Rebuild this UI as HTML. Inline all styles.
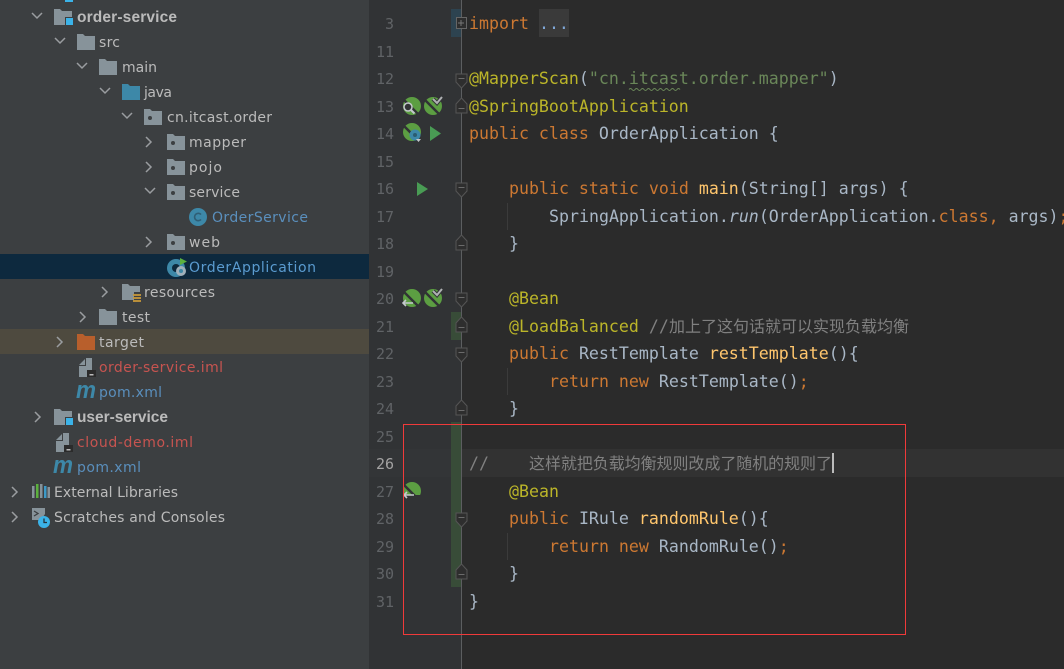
<!DOCTYPE html>
<html><head><meta charset="utf-8"><style>
html,body{margin:0;padding:0;background:#2b2b2b}
svg{display:block}
.t{font:14px "DejaVu Sans",sans-serif;fill:#bbb}
.b{font:bold 15.5px "Liberation Sans",sans-serif;fill:#bbb}
.m{font:16.6px "DejaVu Sans Mono","Noto Sans CJK SC",monospace;fill:#a9b7c6;white-space:pre}
.n{font:15px "DejaVu Sans Mono",monospace;fill:#606366}
.k{fill:#cc7832}.a{fill:#bbb529}.s{fill:#6a8759}.f{fill:#ffc66d}.c{fill:#808080}.bl{fill:#7fa6d6}
.cj{font:16px "Noto Sans CJK SC",sans-serif;fill:#808080}
.pm{font:italic bold 24px "Liberation Sans",sans-serif;fill:#3d88a8}
</style></head><body>
<svg width="1064" height="669" viewBox="0 0 1064 669" xmlns="http://www.w3.org/2000/svg">
<defs>
<path id="dn" d="M0 0l5 5 5-5" fill="none" stroke="#9a9da0" stroke-width="1.500"/>
<path id="rt" d="M0 0l5 5-5 5" fill="none" stroke="#9a9da0" stroke-width="1.500"/>
<path id="fo" d="M0 0h6l2 2h10v14H0z" fill="#87939a"/>
<g id="pk"><path d="M0 0h6l2 2h10v14H0z" fill="#87939a"/><circle cx="6" cy="9" r="2" fill="#3c3f41"/></g>
<g id="mod"><path d="M0 0h6l2 2h10v14H0z" fill="#87939a"/><rect x="11" y="8" width="9" height="9" fill="#3c3f41"/><rect x="12" y="9" width="7" height="7" fill="#3bb3e8"/></g>
<g id="iml"><path d="M0 7l6-6v6zM7 0h6v12H8v7H0V8h7z" fill="#87939a"/><rect x="8" y="12" width="9" height="7" fill="#2b2b2b"/><rect x="10.500" y="16" width="4" height="1.500" fill="#bbb"/></g>
<g id="spr"><circle cx="9" cy="9" r="9" fill="#5c9e42"/><path d="M1 3L15 17" stroke="#313335" stroke-width="2.500"/></g>
<g id="chk"><path d="M9 2l4 4 5-6" fill="none" stroke="#313335" stroke-width="4"/><path d="M9 2l4 4 5-6" fill="none" stroke="#afb1b3" stroke-width="2"/></g>
<g id="fd"><path d="M0 0h11v8l-5.500 6L0 8z" fill="#2e2e2e" stroke="#555" stroke-width="1"/><path d="M2.500 4.500h6" stroke="#6b6b6b"/></g>
<g id="fu"><path d="M0 15h11V6L5.500 0 0 6z" fill="#2e2e2e" stroke="#555" stroke-width="1"/><path d="M2.500 10.500h6" stroke="#6b6b6b"/></g>
</defs>

<rect width="369" height="669" fill="#3c3f41"/>
<rect x="369" width="92" height="669" fill="#313335"/>
<rect x="462" width="602" height="669" fill="#2b2b2b"/>

<!-- tree rows -->
<rect y="254" width="369" height="25" fill="#0d293e"/>
<rect y="329" width="369" height="25" fill="#4e4a3f"/>
<rect x="65" y="0" width="8" height="2" fill="#3bb3e8"/>

<use href="#dn" x="32" y="13"/><use href="#mod" x="54" y="9"/>
<text class="b" x="77" y="22" textLength="100">order-service</text>
<use href="#dn" x="55" y="38"/><use href="#fo" x="77" y="34"/>
<text class="t" x="99" y="47" textLength="21">src</text>
<use href="#dn" x="77" y="63"/><use href="#fo" x="99" y="59"/>
<text class="t" x="122" y="72" textLength="35">main</text>
<use href="#dn" x="100" y="88"/><path d="M122 84h6l2 2h10v14h-18z" fill="#3d88a8"/>
<text class="t" x="144" y="97" textLength="28">java</text>
<use href="#dn" x="122" y="113"/><use href="#pk" x="144" y="109"/>
<text class="t" x="167" y="122" textLength="105">cn.itcast.order</text>
<use href="#rt" x="146" y="137"/><use href="#pk" x="167" y="134"/>
<text class="t" x="189" y="147" textLength="57">mapper</text>
<use href="#rt" x="146" y="162"/><use href="#pk" x="167" y="159"/>
<text class="t" x="189" y="172" textLength="33">pojo</text>
<use href="#dn" x="145" y="188"/><use href="#pk" x="167" y="184"/>
<text class="t" x="189" y="197" textLength="51">service</text>
<circle cx="198" cy="217" r="9" fill="#3d88a8"/><path d="M201 214.500a3.700 3.700 0 1 0 0 5" fill="none" stroke="#2f5e75" stroke-width="1.600"/>
<text class="t" x="212" y="222" textLength="96" style="fill:#5a8fbd">OrderService</text>
<use href="#rt" x="146" y="237"/><use href="#pk" x="167" y="234"/>
<text class="t" x="189" y="247" textLength="31">web</text>
<circle cx="176" cy="268" r="9" fill="#3d88a8"/><circle cx="176" cy="268" r="4" fill="#0d293e"/><path d="M180 258l7 3.500-7 3.500z" fill="#5cb03e"/><circle cx="181" cy="271" r="5" fill="#9fb0bb"/><circle cx="181" cy="271" r="2" fill="#3d88a8"/>
<text class="t" x="189" y="272" textLength="127" style="fill:#5a9bd0">OrderApplication</text>
<use href="#rt" x="102" y="287"/><path d="M122 284h6l2 2h10v6h-6v8h-12z" fill="#87939a"/><path d="M133 295h8M133 298h8M133 301h8" stroke="#c99a3a" stroke-width="1.700"/>
<text class="t" x="144" y="297" textLength="71">resources</text>
<use href="#rt" x="80" y="312"/><use href="#fo" x="99" y="309"/>
<text class="t" x="122" y="322" textLength="28">test</text>
<use href="#rt" x="57" y="337"/><path d="M77 334h6l2 2h10v14H77z" fill="#b85f2c"/>
<text class="t" x="99" y="347" textLength="45">target</text>
<use href="#iml" x="79" y="358"/>
<text class="t" x="99" y="372" textLength="124" style="fill:#c75450">order-service.iml</text>
<text class="pm" x="76" y="398" textLength="20" lengthAdjust="spacingAndGlyphs">m</text>
<text class="t" x="99" y="397" textLength="63" style="fill:#5a8fbd">pom.xml</text>
<use href="#rt" x="35" y="412"/><use href="#mod" x="54" y="409"/>
<text class="b" x="77" y="422" textLength="91">user-service</text>
<use href="#iml" x="56" y="433"/>
<text class="t" x="77" y="447" textLength="116" style="fill:#c75450">cloud-demo.iml</text>
<text class="pm" x="53" y="473" textLength="20" lengthAdjust="spacingAndGlyphs">m</text>
<text class="t" x="77" y="472" textLength="64" style="fill:#5a8fbd">pom.xml</text>
<use href="#rt" x="12" y="487"/>
<rect x="32" y="486" width="2.500" height="12" fill="#87939a"/><rect x="36" y="484" width="2.500" height="14" fill="#5cb03e"/><rect x="40" y="484" width="2.500" height="14" fill="#87939a"/><rect x="44" y="486" width="2.500" height="12" fill="#3d9ac8"/><rect x="47.500" y="487" width="2.500" height="11" fill="#87939a"/>
<text class="t" x="54" y="497" textLength="124">External Libraries</text>
<use href="#rt" x="12" y="512"/>
<path d="M32 508h13v6l-4 6h-9z" fill="#87939a"/><path d="M34 511l4 2.500-4 2.500" fill="none" stroke="#3c3f41" stroke-width="1.300"/><circle cx="44" cy="522" r="6" fill="#3bb3e8"/><path d="M44 518.500v4h3" fill="none" stroke="#263238" stroke-width="1.300"/>
<text class="t" x="54" y="522" textLength="171">Scratches and Consoles</text>

<!-- gutter highlights -->
<rect x="369" y="449" width="92" height="28" fill="#333537"/>
<rect x="451" y="9" width="10" height="28" fill="#2d4350"/>
<rect x="451" y="312" width="10" height="28" fill="#384c38"/>
<rect x="451" y="422" width="10" height="165" fill="#384c38"/>
<rect x="462" y="449" width="602" height="28" fill="#323232"/>
<rect x="461" width="1" height="669" fill="#5c5e60"/>
<rect x="539" y="9" width="30" height="28" fill="#3a3a3a"/>

<!-- line numbers -->
<g class="n" text-anchor="end" transform="translate(0 1)">
<text x="394" y="28">3</text><text x="394" y="56">11</text><text x="394" y="83">12</text><text x="394" y="111">13</text><text x="394" y="138">14</text><text x="394" y="166">15</text><text x="394" y="193">16</text><text x="394" y="221">17</text><text x="394" y="248">18</text><text x="394" y="276">19</text><text x="394" y="303">20</text><text x="394" y="331">21</text><text x="394" y="358">22</text><text x="394" y="386">23</text><text x="394" y="413">24</text><text x="394" y="441">25</text><text x="394" y="468" style="fill:#a4a3a3">26</text><text x="394" y="496">27</text><text x="394" y="523">28</text><text x="394" y="551">29</text><text x="394" y="578">30</text><text x="394" y="606">31</text>
</g>

<!-- indent guides -->
<rect x="507" y="203" width="1" height="27" fill="#3b3b3b"/>
<rect x="507" y="368" width="1" height="27" fill="#3b3b3b"/>
<rect x="507" y="533" width="1" height="27" fill="#3b3b3b"/>

<!-- code -->
<g class="m" transform="translate(0 1)">
<text x="469" y="28"><tspan class="k">import</tspan> <tspan class="bl">...</tspan></text>
<text x="469" y="83"><tspan class="a">@MapperScan</tspan>(<tspan class="s">"cn.itcast.order.mapper"</tspan>)</text>
<text x="469" y="111" class="a">@SpringBootApplication</text>
<text x="469" y="138"><tspan class="k">public class</tspan> OrderApplication {</text>
<text x="509" y="193"><tspan class="k">public static void</tspan> <tspan class="f">main</tspan>(String[] args) {</text>
<text x="549" y="221">SpringApplication.<tspan font-style="italic">run</tspan>(OrderApplication.<tspan class="k">class, </tspan>args)<tspan class="k">;</tspan></text>
<text x="509" y="248">}</text>
<text x="509" y="303" class="a">@Bean</text>
<text x="509" y="331"><tspan class="a">@LoadBalanced</tspan> <tspan class="c">//</tspan></text>
<text x="509" y="358"><tspan class="k">public</tspan> RestTemplate <tspan class="f">restTemplate</tspan>(){</text>
<text x="549" y="386"><tspan class="k">return new</tspan> RestTemplate()<tspan class="k">;</tspan></text>
<text x="509" y="413">}</text>
<text x="469" y="468" class="c">//</text>
<text x="509" y="496" class="a">@Bean</text>
<text x="509" y="523"><tspan class="k">public</tspan> IRule <tspan class="f">randomRule</tspan>(){</text>
<text x="549" y="551"><tspan class="k">return new</tspan> RandomRule()<tspan class="k">;</tspan></text>
<text x="509" y="578">}</text>
<text x="469" y="606">}</text>
</g>
<text class="cj" x="669" y="332" textLength="240">加上了这句话就可以实现负载均衡</text>
<text class="cj" x="529" y="469" textLength="303">这样就把负载均衡规则改成了随机的规则了</text>
<rect x="832" y="453" width="2" height="20" fill="#bbb"/>
<path d="M629 89.500q1.500-2 3 0t3 0 3 0 3 0 3 0 3 0 3 0 3 0 3 0 3 0 3 0 3 0 3 0 3 0 3 0 3 0 3 0" fill="none" stroke="#6a8759" stroke-width="1"/>

<!-- fold marks -->
<rect x="456.500" y="17.500" width="10" height="11" fill="#2e2e2e" stroke="#666"/><path d="M458 23h6M461 20v6" stroke="#777"/>
<use href="#fd" x="456" y="74"/><use href="#fu" x="456" y="98"/>
<use href="#fd" x="456" y="183"/><use href="#fu" x="456" y="235"/>
<use href="#fd" x="456" y="293"/><use href="#fu" x="456" y="317"/>
<use href="#fd" x="456" y="348"/><use href="#fu" x="456" y="400"/>
<use href="#fd" x="456" y="513"/><use href="#fu" x="456" y="564"/>

<!-- gutter icons -->
<use href="#spr" x="403" y="97"/><circle cx="408" cy="107" r="4" fill="#313335" stroke="#c4c8cc" stroke-width="1.500"/><path d="M411 110l3.500 3.500" stroke="#c4c8cc" stroke-width="2"/>
<use href="#spr" x="424" y="97"/><use href="#chk" x="424" y="97"/>
<use href="#spr" x="403" y="123"/><circle cx="415" cy="135" r="5.500" fill="#3d88a8"/><circle cx="415" cy="135" r="2" fill="#2b5d72"/><path d="M416 139h5l-2.500 3z" fill="#c4c8cc"/>
<path d="M430 126l11 7.500-11 7.500z" fill="#499c54"/>
<path d="M417 182l11 7-11 7z" fill="#499c54"/>
<use href="#spr" x="403" y="289"/><path d="M403 303h10M406 300l-3 3 3 3" fill="none" stroke="#c4c8cc" stroke-width="1.600"/>
<use href="#spr" x="424" y="289"/><use href="#chk" x="424" y="289"/>
<clipPath id="h"><rect x="403" y="480" width="20" height="15"/></clipPath>
<g clip-path="url(#h)"><use href="#spr" x="403" y="482"/></g><path d="M404 495h10M407 492l-3 3 3 3" fill="none" stroke="#c4c8cc" stroke-width="1.600"/>

<!-- red annotation box -->
<rect x="403.500" y="424.500" width="502" height="210" fill="none" stroke="#f03a3a" stroke-width="1"/>
</svg>
</body></html>
